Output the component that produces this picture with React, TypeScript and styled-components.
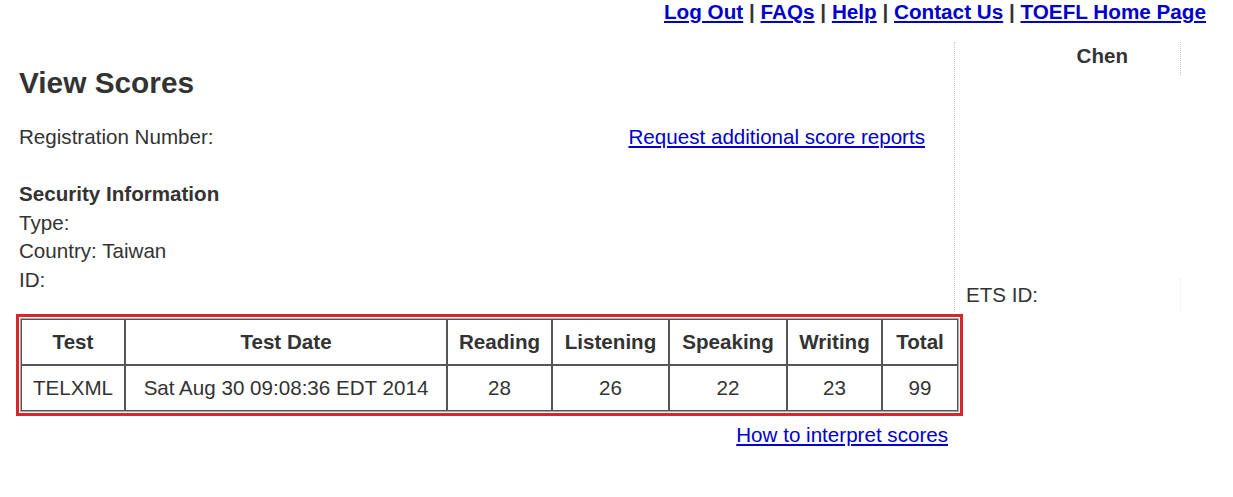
import React from "react";
import styled, { createGlobalStyle } from "styled-components";

const GlobalStyle = createGlobalStyle`
  html, body { margin: 0; padding: 0; background: #ffffff; }
  body {
    font-family: "Liberation Sans", Arial, sans-serif;
    font-size: 20.6px;
    color: #333333;
  }
`;

const Page = styled.div`
  width: 1233px;
  min-height: 497px;
  display: flex;
  flex-direction: column;
`;

const TopNav = styled.nav`
  display: flex;
  justify-content: flex-end;
  padding-right: 27px;
  height: 24px;
  line-height: 24px;
  font-weight: bold;
  font-size: 20.7px;
`;

const NavLink = styled.a`
  color: #0000cc;
  text-decoration: underline;
`;

const Sep = styled.span`
  color: #333333;
  white-space: pre;
`;

const TopSection = styled.div`
  display: flex;
  margin-top: 18px;
`;

const LeftColumn = styled.div`
  width: 954px;
  box-sizing: border-box;
  padding-left: 19px;
  padding-right: 29px;
  display: flex;
  flex-direction: column;
`;

const Title = styled.h1`
  margin: 23px 0 0 0;
  font-size: 29.8px;
  line-height: 36px;
  font-weight: bold;
  color: #333333;
`;

const RegRow = styled.div`
  display: flex;
  justify-content: space-between;
  margin-top: 22px;
  line-height: 28.5px;
`;

const TextLink = styled.a`
  color: #0000cc;
  text-decoration: underline;
`;

const InfoBlock = styled.div`
  margin-top: 28.5px;
  line-height: 28.5px;
  display: flex;
  flex-direction: column;
`;

const InfoHeading = styled.div`
  font-weight: bold;
`;

const RightPanel = styled.div`
  width: 227px;
  height: 270px;
  box-sizing: border-box;
  border-left: 1px dotted #c8c8c8;
  display: flex;
  flex-direction: column;
  justify-content: space-between;
`;

const NameCell = styled.div`
  height: 33px;
  box-sizing: border-box;
  line-height: 28px;
  text-align: right;
  padding-right: 52px;
  font-weight: bold;
  border-right: 1px dotted #c8c8c8;
`;

const EtsCell = styled.div`
  height: 34px;
  box-sizing: border-box;
  line-height: 28px;
  padding: 3px 0 3px 11px;
  border-right: 1px dotted #ececec;
`;

const Highlight = styled.div`
  align-self: flex-start;
  margin-left: 16px;
  margin-top: 2px;
  border: 3px solid #d7262e;
  padding: 1px;
`;

const ScoreTable = styled.table`
  border-collapse: separate;
  border-spacing: 0;
  border: 1px solid #a8a8a8;
  table-layout: fixed;
  width: 937px;
`;

const HeadCell = styled.th<{ $w: number }>`
  width: ${(p) => p.$w}px;
  height: 46px;
  box-sizing: border-box;
  border: 1px solid #555555;
  padding: 0;
  text-align: center;
  font-weight: bold;
  font-size: 20.6px;
  color: #333333;
`;

const DataCell = styled.td`
  height: 46px;
  box-sizing: border-box;
  border: 1px solid #555555;
  padding: 0;
  text-align: center;
  font-size: 20.6px;
  color: #333333;
`;

const Footer = styled.div`
  width: 948px;
  display: flex;
  justify-content: flex-end;
  margin-top: 5px;
  line-height: 28.5px;
`;

const columns: { label: string; w: number }[] = [
  { label: "Test", w: 104 },
  { label: "Test Date", w: 322 },
  { label: "Reading", w: 105 },
  { label: "Listening", w: 117 },
  { label: "Speaking", w: 118 },
  { label: "Writing", w: 95 },
  { label: "Total", w: 76 },
];

const row = ["TELXML", "Sat Aug 30 09:08:36 EDT 2014", "28", "26", "22", "23", "99"];

const navItems = ["Log Out", "FAQs", "Help", "Contact Us", "TOEFL Home Page"];

export default function App() {
  return (
    <>
      <GlobalStyle />
      <Page>
        <TopNav>
          {navItems.map((item, i) => (
            <React.Fragment key={item}>
              {i > 0 && <Sep> | </Sep>}
              <NavLink href="#">{item}</NavLink>
            </React.Fragment>
          ))}
        </TopNav>
        <TopSection>
          <LeftColumn>
            <Title>View Scores</Title>
            <RegRow>
              <span>Registration Number:</span>
              <TextLink href="#">Request additional score reports</TextLink>
            </RegRow>
            <InfoBlock>
              <InfoHeading>Security Information</InfoHeading>
              <div>Type:</div>
              <div>Country: Taiwan</div>
              <div>ID:</div>
            </InfoBlock>
          </LeftColumn>
          <RightPanel>
            <NameCell>Chen</NameCell>
            <EtsCell>ETS ID:</EtsCell>
          </RightPanel>
        </TopSection>
        <Highlight>
          <ScoreTable>
            <thead>
              <tr>
                {columns.map((c) => (
                  <HeadCell key={c.label} $w={c.w}>
                    {c.label}
                  </HeadCell>
                ))}
              </tr>
            </thead>
            <tbody>
              <tr>
                {row.map((v, i) => (
                  <DataCell key={i}>{v}</DataCell>
                ))}
              </tr>
            </tbody>
          </ScoreTable>
        </Highlight>
        <Footer>
          <TextLink href="#">How to interpret scores</TextLink>
        </Footer>
      </Page>
    </>
  );
}
